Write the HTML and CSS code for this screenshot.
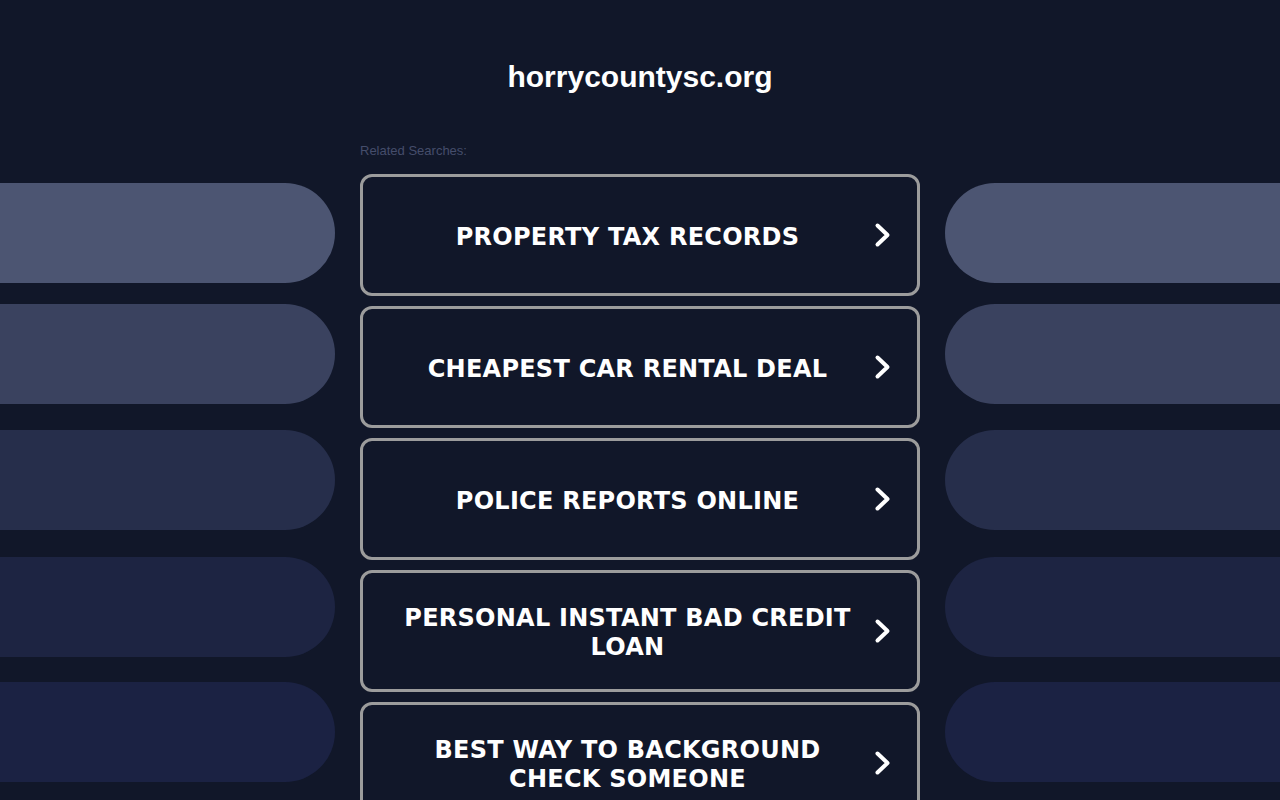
FILE: index.html
```html
<!DOCTYPE html>
<html lang="en">
<head>
<meta charset="utf-8">
<title>horrycountysc.org</title>
<link rel="stylesheet" href="styles.css">
</head>
<body>
<header class="header">
  <h1 class="domain">horrycountysc.org</h1>
</header>
<main class="layout">
  <div class="side side-left">
    <div class="pill pill-1"></div>
    <div class="pill pill-2"></div>
    <div class="pill pill-3"></div>
    <div class="pill pill-4"></div>
    <div class="pill pill-5"></div>
  </div>
  <section class="center">
    <p class="label">Related Searches:</p>
    <ul class="links">
      <li><a class="card" href="#"><span class="card-text">PROPERTY TAX RECORDS</span><svg class="chev" viewBox="0 0 17 26" width="17" height="26"><path d="M3.5 3.5 L13.5 13 L3.5 22.5"/></svg></a></li>
      <li><a class="card" href="#"><span class="card-text">CHEAPEST CAR RENTAL DEAL</span><svg class="chev" viewBox="0 0 17 26" width="17" height="26"><path d="M3.5 3.5 L13.5 13 L3.5 22.5"/></svg></a></li>
      <li><a class="card" href="#"><span class="card-text">POLICE REPORTS ONLINE</span><svg class="chev" viewBox="0 0 17 26" width="17" height="26"><path d="M3.5 3.5 L13.5 13 L3.5 22.5"/></svg></a></li>
      <li><a class="card" href="#"><span class="card-text">PERSONAL INSTANT BAD CREDIT LOAN</span><svg class="chev" viewBox="0 0 17 26" width="17" height="26"><path d="M3.5 3.5 L13.5 13 L3.5 22.5"/></svg></a></li>
      <li><a class="card" href="#"><span class="card-text">BEST WAY TO BACKGROUND CHECK SOMEONE</span><svg class="chev" viewBox="0 0 17 26" width="17" height="26"><path d="M3.5 3.5 L13.5 13 L3.5 22.5"/></svg></a></li>
    </ul>
  </section>
  <div class="side side-right">
    <div class="pill pill-1"></div>
    <div class="pill pill-2"></div>
    <div class="pill pill-3"></div>
    <div class="pill pill-4"></div>
    <div class="pill pill-5"></div>
  </div>
</main>
</body>
</html>
```

FILE: styles.css
```css
html, body {
  margin: 0;
  padding: 0;
  background: #111729;
  height: 800px;
  overflow: hidden;
}

body {
  font-family: "Liberation Sans", Arial, sans-serif;
  color: #ffffff;
}

.header {
  padding: 59px 0 48px;
  text-align: center;
}

.domain {
  margin: 0;
  font-family: "Liberation Sans", Arial, sans-serif;
  font-weight: bold;
  font-size: 30px;
  line-height: 36px;
  color: #ffffff;
}

.layout {
  display: grid;
  grid-template-columns: 335px 560px 335px;
  column-gap: 25px;
}

.side {
  display: flex;
  flex-direction: column;
  padding-top: 40px;
}

.pill {
  height: 100px;
}

.pill-2 { margin-top: 21px; }
.pill-3 { margin-top: 26px; }
.pill-4 { margin-top: 27px; }
.pill-5 { margin-top: 25px; }

.side-left .pill {
  border-radius: 0 50px 50px 0;
}

.side-right .pill {
  border-radius: 50px 0 0 50px;
}

.pill-1 { background: #4c5572; }
.pill-2 { background: #3a425f; }
.pill-3 { background: #262e4b; }
.pill-4 { background: #1d2442; }
.pill-5 { background: #1b2243; }

.label {
  margin: 0 0 15px;
  font-size: 13px;
  line-height: 16px;
  color: #454d6b;
}

.links {
  list-style: none;
  margin: 0;
  padding: 0;
  display: flex;
  flex-direction: column;
  gap: 10px;
}

.card {
  box-sizing: border-box;
  height: 122px;
  display: flex;
  align-items: center;
  gap: 12px;
  padding: 4px 26px 0 30px;
  border: 3px solid #9c9c9c;
  border-radius: 12px;
  background: #111729;
  text-decoration: none;
  color: #ffffff;
}

.card-text {
  flex: 1;
  text-align: center;
  font-family: "DejaVu Sans", Verdana, sans-serif;
  font-weight: bold;
  font-size: 24px;
  line-height: 29px;
  letter-spacing: 0.25px;
  color: #ffffff;
}

.chev {
  flex: none;
  margin-top: -4px;
  fill: none;
  stroke: #ffffff;
  stroke-width: 4;
  stroke-linecap: round;
  stroke-linejoin: round;
}
```
